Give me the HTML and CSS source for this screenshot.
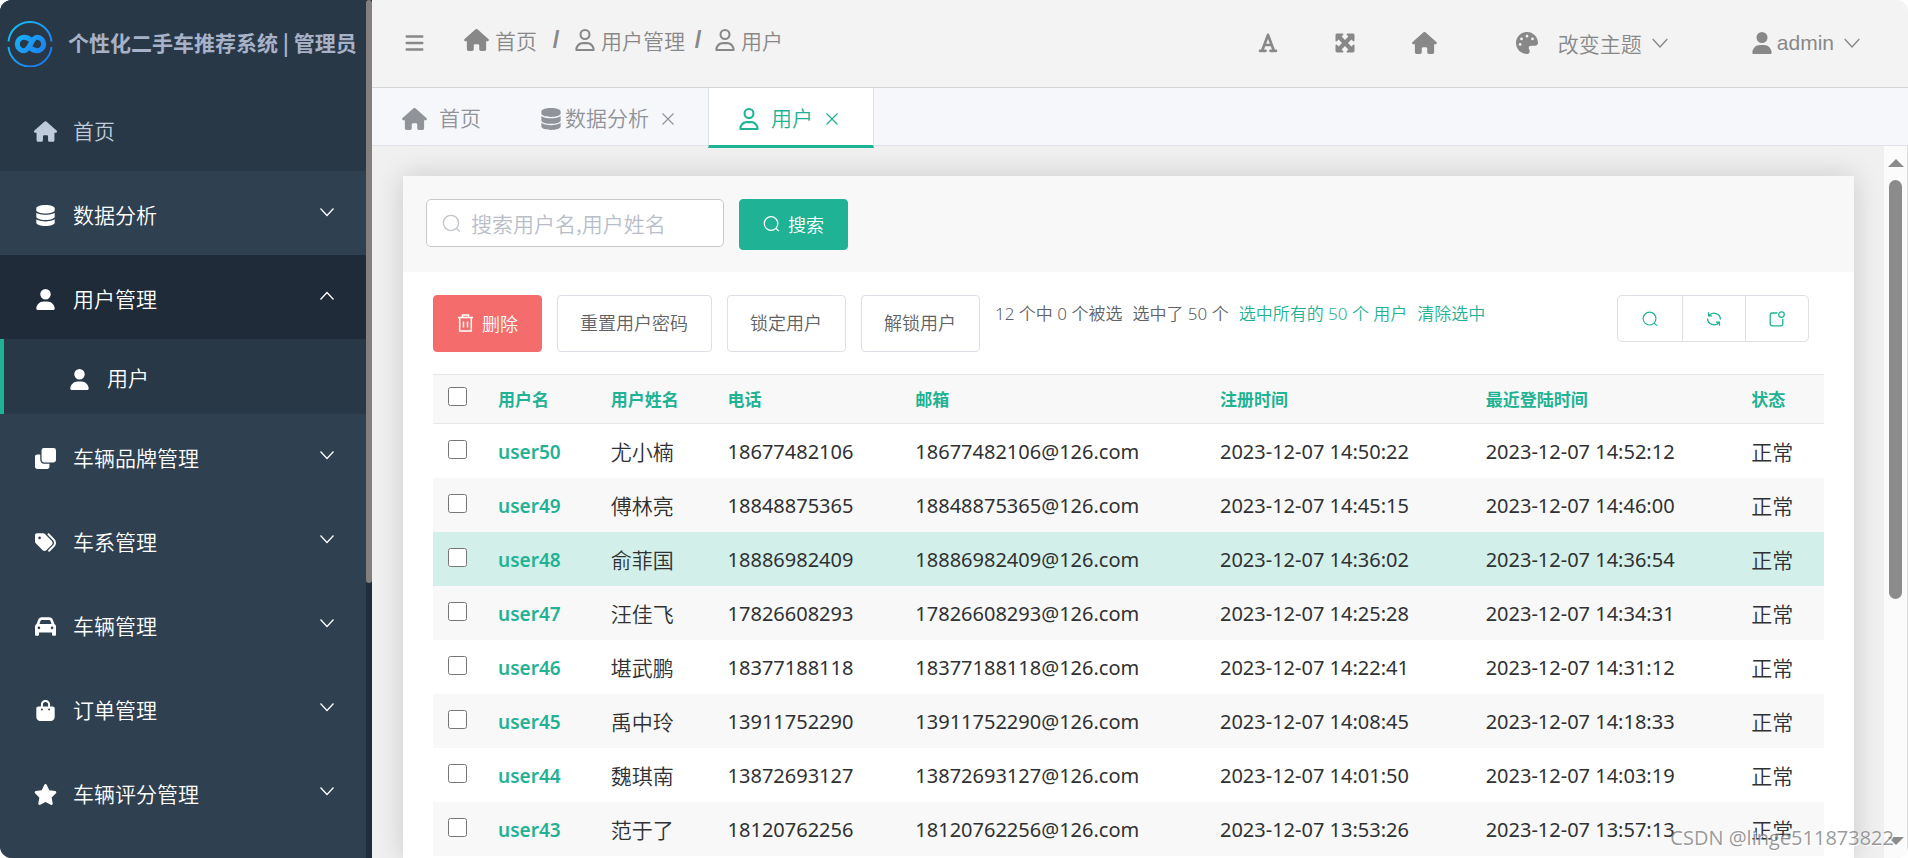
FILE: index.html
```html
<!DOCTYPE html>
<html lang="zh-CN">
<head>
<meta charset="utf-8">
<title>用户</title>
<link rel="stylesheet" href="styles.css">
</head>
<body>
<svg class="sprite" aria-hidden="true">
  <symbol id="house" viewBox="0 0 576 512"><path d="M575.800 255.500c0 18-15 32.100-32 32.100h-32l.7 160.200V472c0 22.100-17.900 40-40 40H392c-22.100 0-40-17.900-40-40v-88c0-17.700-14.300-32-32-32h-64c-17.700 0-32 14.300-32 32v88c0 22.100-17.900 40-40 40h-80c-22.100 0-40-17.900-40-40V287.600H32c-18 0-32-14-32-32.100 0-9 3-17 10-24L266.400 8c7-7 15-8 22-8s15 2 21 7l255.400 224.500c8 7 12 15 11 24z"/></symbol>
  <symbol id="user" viewBox="0 0 448 512"><path d="M224 256A128 128 0 1 0 224 0a128 128 0 1 0 0 256zm-45.700 48C79.800 304 0 383.800 0 482.300 0 498.700 13.300 512 29.700 512h388.600c16.400 0 29.700-13.300 29.700-29.700C448 383.800 368.200 304 269.700 304z"/></symbol>
  <symbol id="user-line" viewBox="0 0 448 512"><path d="M304 128a80 80 0 1 0-160 0 80 80 0 1 0 160 0zM96 128a128 128 0 1 1 256 0A128 128 0 1 1 96 128zM49.300 464h349.400c-8.900-63.300-63.300-112-129-112h-91.400c-65.700 0-120.100 48.700-129 112zM0 482.300C0 383.800 79.800 304 178.300 304h91.400C368.200 304 448 383.800 448 482.300c0 16.400-13.300 29.700-29.700 29.700H29.700C13.300 512 0 498.700 0 482.300z"/></symbol>
  <symbol id="database" viewBox="0 0 448 512"><path d="M448 80v48c0 44.200-100.300 80-224 80S0 172.200 0 128V80C0 35.800 100.300 0 224 0s224 35.800 224 80zM393.200 214.700c20.800-7.400 39.900-16.900 54.800-28.600V288c0 44.200-100.300 80-224 80S0 332.200 0 288V186.100c14.900 11.800 34 21.200 54.800 28.600C99.700 230.700 159.500 240 224 240s124.300-9.300 169.200-25.300zM0 346.100c14.900 11.800 34 21.200 54.800 28.600C99.700 390.700 159.500 400 224 400s124.300-9.300 169.200-25.300c20.800-7.400 39.900-16.900 54.800-28.600V432c0 44.200-100.300 80-224 80S0 476.200 0 432z"/></symbol>
  <symbol id="clone" viewBox="0 0 512 512"><path d="M0 216c0-35 25-56 56-56h72v128c0 53 43 96 96 96h128v72c0 31-25 56-56 56H56c-31 0-56-25-56-56z"/><rect x="160" width="352" height="352" rx="60"/></symbol>
  <symbol id="tags" viewBox="0 0 512 512"><path d="M345 39.100 472.800 168.400c52.400 53 52.400 138.200 0 191.200L360.800 472.900c-9.300 9.400-24.500 9.500-33.900.2s-9.500-24.500-.2-33.900L438.600 325.900c33.900-34.300 33.900-89.400 0-123.700L310.900 72.900c-9.300-9.400-9.200-24.600.2-33.900s24.600-9.200 33.900.1zM0 229.500V80c0-26.500 21.500-48 48-48h149.500c17 0 33.300 6.700 45.300 18.700l168 168c25 25 25 65.500 0 90.500L277.300 442.700c-25 25-65.500 25-90.500 0l-168-168C6.700 262.700 0 246.500 0 229.500zM144 144a32 32 0 1 0-64 0 32 32 0 1 0 64 0z"/></symbol>
  <symbol id="car" viewBox="0 0 512 512"><path d="M135.200 117.400 109.100 192h293.800l-26.100-74.600C372.300 104.600 360.200 96 346.600 96H165.400c-13.600 0-25.700 8.600-30.200 21.400zM39.600 196.800 74.800 96.300C88.300 57.800 124.600 32 165.400 32h181.200c40.800 0 77.100 25.800 90.600 64.300l35.200 100.500c23.200 9.600 39.600 32.500 39.600 59.200v192c0 17.700-14.300 32-32 32h-32c-17.700 0-32-14.300-32-32v-48H96v48c0 17.700-14.300 32-32 32H32c-17.700 0-32-14.300-32-32V256c0-26.700 16.400-49.600 39.600-59.200zM128 288a32 32 0 1 0-64 0 32 32 0 1 0 64 0zm288 32a32 32 0 1 0 0-64 32 32 0 1 0 0 64z"/></symbol>
  <symbol id="bag" viewBox="0 0 448 512"><path d="M160 112c0-35.300 28.700-64 64-64s64 28.700 64 64v48H160zm-48 48H48c-26.500 0-48 21.500-48 48v208c0 53 43 96 96 96h256c53 0 96-43 96-96V208c0-26.500-21.500-48-48-48h-64v-48C336 50.100 285.900 0 224 0S112 50.100 112 112zm24 48a24 24 0 1 1 0 48 24 24 0 1 1 0-48zm152 24a24 24 0 1 1 48 0 24 24 0 1 1-48 0z"/></symbol>
  <symbol id="star" viewBox="32 0 512 512"><path d="M316.900 18C311.600 7 300.400 0 288.100 0s-23.400 7-28.800 18L195 150.300 51.400 171.500c-12 1.800-22 10.200-25.700 21.700s-.7 24.200 7.900 32.700L137.800 329l-24.600 145.700c-2 12 3 24.200 12.900 31.300s23 8 33.800 2.300l128.300-68.500 128.300 68.500c10.800 5.700 23.900 4.900 33.800-2.300s14.900-19.300 12.900-31.300L438.500 329l104.200-103.100c8.600-8.500 11.700-21.200 7.900-32.700s-13.700-19.900-25.700-21.700l-143.700-21.200z"/></symbol>
  <symbol id="palette" viewBox="0 0 512 512"><path d="M512 256v2.700c-.4 36.500-33.600 61.300-70.100 61.300H344c-26.500 0-48 21.500-48 48 0 3.400.4 6.700 1 9.900 2.100 10.200 6.500 20 10.800 29.900 6.100 13.800 12.100 27.500 12.100 42 0 31.800-21.600 60.700-53.400 62-3.500.1-7 .2-10.600.2C114.600 512 0 397.400 0 256S114.600 0 256 0s256 114.600 256 256zM128 288a32 32 0 1 0-64 0 32 32 0 1 0 64 0zm0-96a32 32 0 1 0 0-64 32 32 0 1 0 0 64zM288 96a32 32 0 1 0-64 0 32 32 0 1 0 64 0zm96 96a32 32 0 1 0 0-64 32 32 0 1 0 0 64z"/></symbol>
  <symbol id="font" viewBox="0 0 20 20"><path d="M10 2 4.200 17.500M10 2l5.800 15.500M6.500 12h7M2 17.800h5.500M12.500 17.800H18" fill="none" stroke="currentColor" stroke-width="2.700" stroke-linecap="round" stroke-linejoin="round"/></symbol>
  <symbol id="expand" viewBox="0 0 20 20"><path d="M.5 2.200C.5 1.200 1.200.5 2.200.5h5.300c.9 0 1.200 1 .6 1.600L6.600 3.600 10 7l3.400-3.400-1.500-1.500c-.6-.6-.3-1.600.6-1.600h5.300c1 0 1.700.7 1.700 1.700v5.300c0 .9-1 1.200-1.600.6l-1.500-1.500L13 10l3.400 3.400 1.500-1.500c.6-.6 1.600-.3 1.600.6v5.300c0 1-.7 1.700-1.700 1.700h-5.300c-.9 0-1.200-1-.6-1.600l1.500-1.500L10 13l-3.400 3.400 1.500 1.500c.6.600.3 1.600-.6 1.600H2.200c-1 0-1.700-.7-1.700-1.700v-5.300c0-.9 1-1.200 1.600-.6l1.500 1.500L7 10 3.600 6.600 2.100 8.100C1.500 8.700.5 8.400.5 7.500z"/></symbol>
  <symbol id="bars" viewBox="0 0 18 18"><path d="M1.200 2.500h15.600M1.200 9h15.600M1.200 15.500h15.600" stroke="currentColor" stroke-width="2.400" stroke-linecap="round"/></symbol>
  <symbol id="down" viewBox="0 0 16 16"><path d="m1.500 4.500 6.500 7 6.500-7" fill="none" stroke="currentColor" stroke-width="1.300"/></symbol>
  <symbol id="up" viewBox="0 0 16 16"><path d="m1.500 11.500 6.500-7 6.500 7" fill="none" stroke="currentColor" stroke-width="1.300"/></symbol>
  <symbol id="close" viewBox="0 0 14 14"><path d="m1.500 1.500 11 11m0-11-11 11" stroke="currentColor" stroke-width="1.200"/></symbol>
  <symbol id="search" viewBox="0 0 18 18"><g fill="none" stroke="currentColor" stroke-width="1.300"><circle cx="8.500" cy="8.500" r="7.200"/><path d="m13.500 13.500 3.300 3"/></g></symbol>
  <symbol id="trash" viewBox="0 0 16 18"><path d="M.5 3.500h15M5 3V1h6v2M2.200 4v13h11.600V4M6 7.500v6M10 7.500v6" fill="none" stroke="currentColor" stroke-width="1.500"/></symbol>
  <symbol id="refresh" viewBox="0 0 16 16"><path d="M2.500 1.200v3.600h3.600M3 4.500a6.500 6.500 0 0 1 11.500 4M13.500 14.800v-3.600H9.900M13 11.500a6.500 6.500 0 0 1-11.500-4" fill="none" stroke="currentColor" stroke-width="1.300"/></symbol>
  <symbol id="notify" viewBox="0 0 16 16"><g fill="none" stroke="currentColor" stroke-width="1.300"><path d="M8.500 2H3Q1.200 2 1.200 4v8.800q0 2 2 2h8.600q2 0 2-2V7.800"/><circle cx="12.500" cy="3.600" r="2.800"/></g></symbol>
</svg>

<div class="app">
  <aside class="side">
    <nav class="menu">
      <div class="brand">
        <svg class="brand-logo" viewBox="0 0 46 46" aria-hidden="true">
          <defs><linearGradient id="blue" gradientUnits="userSpaceOnUse" x1="4" y1="8" x2="42" y2="38"><stop offset="0" stop-color="#18bcf5"/><stop offset="1" stop-color="#1f77f0"/></linearGradient></defs>
          <g fill="none" stroke="url(#blue)"><path d="M1.500 20.500a21.600 21.600 0 0 1 43 0M1.500 26a21.600 21.600 0 0 0 43 0" stroke-width="2"/><path d="M25 20c-3-2.800-5.500-3.700-8-3.700a6.500 6.500 0 0 0 0 13.400c6 0 7.500-13.400 13-13.400a6.500 6.500 0 0 1 0 13.400c-2.500 0-5-1-7.500-3.700" stroke-width="5"/></g>
        </svg>
        <strong>个性化二手车推荐系统 | 管理员</strong>
      </div>
      <a class="item home" href="#"><svg><use href="#house"/></svg><span>首页</span></a>
      <button class="item"><svg><use href="#database"/></svg><span>数据分析</span><svg class="arrow"><use href="#down"/></svg></button>
      <button class="item open"><svg><use href="#user"/></svg><span>用户管理</span><svg class="arrow"><use href="#up"/></svg></button>
      <a class="item sub" href="#"><svg><use href="#user"/></svg><span>用户</span></a>
      <button class="item"><svg><use href="#clone"/></svg><span>车辆品牌管理</span><svg class="arrow"><use href="#down"/></svg></button>
      <button class="item"><svg><use href="#tags"/></svg><span>车系管理</span><svg class="arrow"><use href="#down"/></svg></button>
      <button class="item"><svg><use href="#car"/></svg><span>车辆管理</span><svg class="arrow"><use href="#down"/></svg></button>
      <button class="item"><svg><use href="#bag"/></svg><span>订单管理</span><svg class="arrow"><use href="#down"/></svg></button>
      <button class="item"><svg><use href="#star"/></svg><span>车辆评分管理</span><svg class="arrow"><use href="#down"/></svg></button>
    </nav>
    <div class="side-track"><div class="side-thumb"></div></div>
  </aside>

  <div class="main">
    <header class="top">
      <button class="plain" aria-label="折叠菜单"><svg class="bars"><use href="#bars"/></svg></button>
      <nav class="crumbs">
        <a href="#"><svg class="wide"><use href="#house"/></svg>首页</a><b>/</b>
        <a href="#"><svg><use href="#user-line"/></svg>用户管理</a><b class="tight">/</b>
        <a href="#"><svg><use href="#user-line"/></svg>用户</a>
      </nav>
      <div class="tools">
        <button class="plain" aria-label="字体"><svg><use href="#font"/></svg></button>
        <button class="plain" aria-label="全屏"><svg><use href="#expand"/></svg></button>
        <button class="plain" aria-label="首页"><svg class="wide"><use href="#house"/></svg></button>
      </div>
      <button class="plain theme"><svg class="lead"><use href="#palette"/></svg>改变主题<svg class="caret"><use href="#down"/></svg></button>
      <button class="plain account"><svg class="lead"><use href="#user"/></svg>admin<svg class="caret"><use href="#down"/></svg></button>
    </header>

    <nav class="tabs">
      <a class="tab first" href="#"><svg class="wide"><use href="#house"/></svg><span>首页</span></a>
      <a class="tab data" href="#"><svg><use href="#database"/></svg><span>数据分析</span><svg class="x"><use href="#close"/></svg></a>
      <a class="tab active" href="#"><svg><use href="#user-line"/></svg><span>用户</span><svg class="x"><use href="#close"/></svg></a>
    </nav>

    <div class="view">
      <main class="content">
        <section class="card">
          <form class="search">
            <label class="field"><svg><use href="#search"/></svg><input type="text" placeholder="搜索用户名,用户姓名" aria-label="搜索用户名,用户姓名"></label>
            <button type="button" class="btn primary"><svg><use href="#search"/></svg>搜索</button>
          </form>
          <div class="body">
            <div class="toolbar">
              <button class="btn danger"><svg><use href="#trash"/></svg>删除</button>
              <button class="btn">重置用户密码</button>
              <button class="btn">锁定用户</button>
              <button class="btn">解锁用户</button>
              <p class="summary"><span>12 个中 0 个被选</span><span>选中了 50 个</span><a href="#">选中所有的 50 个 用户</a><a href="#">清除选中</a></p>
              <div class="group">
                <button aria-label="搜索"><svg><use href="#search"/></svg></button>
                <button aria-label="刷新"><svg><use href="#refresh"/></svg></button>
                <button aria-label="新窗口"><svg><use href="#notify"/></svg></button>
              </div>
            </div>
            <table class="users">
              <colgroup><col class="c-check"><col class="c-user"><col class="c-name"><col class="c-phone"><col class="c-mail"><col class="c-time"><col class="c-time"><col class="c-state"></colgroup>
              <thead><tr><th><input type="checkbox" aria-label="全选"></th><th>用户名</th><th>用户姓名</th><th>电话</th><th>邮箱</th><th>注册时间</th><th>最近登陆时间</th><th>状态</th></tr></thead>
              <tbody>
                <tr><td><input type="checkbox" aria-label="user50"></td><td><a href="#">user50</a></td><td class="cn">尤小楠</td><td>18677482106</td><td>18677482106@126.com</td><td>2023-12-07 14:50:22</td><td>2023-12-07 14:52:12</td><td class="cn">正常</td></tr>
                <tr><td><input type="checkbox" aria-label="user49"></td><td><a href="#">user49</a></td><td class="cn">傅林亮</td><td>18848875365</td><td>18848875365@126.com</td><td>2023-12-07 14:45:15</td><td>2023-12-07 14:46:00</td><td class="cn">正常</td></tr>
                <tr class="hover"><td><input type="checkbox" aria-label="user48"></td><td><a href="#">user48</a></td><td class="cn">俞菲国</td><td>18886982409</td><td>18886982409@126.com</td><td>2023-12-07 14:36:02</td><td>2023-12-07 14:36:54</td><td class="cn">正常</td></tr>
                <tr><td><input type="checkbox" aria-label="user47"></td><td><a href="#">user47</a></td><td class="cn">汪佳飞</td><td>17826608293</td><td>17826608293@126.com</td><td>2023-12-07 14:25:28</td><td>2023-12-07 14:34:31</td><td class="cn">正常</td></tr>
                <tr><td><input type="checkbox" aria-label="user46"></td><td><a href="#">user46</a></td><td class="cn">堪武鹏</td><td>18377188118</td><td>18377188118@126.com</td><td>2023-12-07 14:22:41</td><td>2023-12-07 14:31:12</td><td class="cn">正常</td></tr>
                <tr><td><input type="checkbox" aria-label="user45"></td><td><a href="#">user45</a></td><td class="cn">禹中玲</td><td>13911752290</td><td>13911752290@126.com</td><td>2023-12-07 14:08:45</td><td>2023-12-07 14:18:33</td><td class="cn">正常</td></tr>
                <tr><td><input type="checkbox" aria-label="user44"></td><td><a href="#">user44</a></td><td class="cn">魏琪南</td><td>13872693127</td><td>13872693127@126.com</td><td>2023-12-07 14:01:50</td><td>2023-12-07 14:03:19</td><td class="cn">正常</td></tr>
                <tr><td><input type="checkbox" aria-label="user43"></td><td><a href="#">user43</a></td><td class="cn">范于了</td><td>18120762256</td><td>18120762256@126.com</td><td>2023-12-07 13:53:26</td><td>2023-12-07 13:57:13</td><td class="cn">正常</td></tr>
              </tbody>
            </table>
          </div>
        </section>
      </main>
      <div class="scrollbar"><i class="tri-up"></i><div class="track"><div class="thumb"></div></div><i class="tri-down"></i></div>
    </div>
  </div>
  <div class="watermark">CSDN @linge511873822</div>
</div>
</body>
</html>
```
FILE: styles.css
```css
:root {
  --green: #1fb294;
  --cjk: "Noto Sans CJK SC";
}

* { box-sizing: border-box; }

body {
  margin: 0;
  background: #fff;
  font-family: "Noto Sans", var(--cjk), sans-serif;
  font-weight: 400;
  color: #303133;
}

button, input { font: inherit; }
button { cursor: pointer; }
a { color: inherit; text-decoration: none; }
svg { fill: currentColor; flex: none; }
.sprite { position: absolute; width: 0; height: 0; }

.app {
  position: relative;
  display: flex;
  height: 100vh;
  overflow: hidden;
  border-radius: 12px;
}

/* Sidebar */
.side { display: flex; flex: none; width: 372px; background: #2f4050; }
.menu { flex: 1; overflow: hidden; background: #2f4050; font-family: var(--cjk), sans-serif; font-weight: 350; }
.side-track { width: 6px; background: #202d3a; }
.side-thumb { height: 68%; border-radius: 3px; background: #827f7e; }

.brand {
  display: flex;
  align-items: center;
  gap: 15px;
  height: 87px;
  padding-left: 7px;
  background: #293846;
  color: #a7b1c8;
  font-size: 21px;
  white-space: nowrap;
}
.brand strong { padding-bottom: 3px; font-weight: 700; }
.brand-logo { width: 46px; height: 46px; }

.item {
  display: flex;
  align-items: center;
  width: 100%;
  height: 84px;
  padding: 5px 31px 0 34px;
  border: 0;
  background: none;
  color: #fff;
  font-size: 21px;
  text-align: left;
}
.item span { padding-bottom: 4px; }
.item svg { width: 23px; height: 21px; margin-right: 16px; }
.item svg.arrow { width: 16px; height: 16px; margin: 0 0 8px auto; }
.item.home { background: #293846; color: #bfcbd9; }
.item.open { background: #202b39; }
.item.sub { height: 75px; padding-left: 64px; border-left: 4px solid var(--green); background: #293846; }

/* Header */
.main { display: flex; flex: 1; flex-direction: column; min-width: 0; background: #f0f0f0; }
.plain { display: flex; align-items: center; padding: 0; border: 0; background: none; color: #888; }

.top {
  display: flex;
  flex: none;
  align-items: center;
  height: 88px;
  padding: 0 47px 2px 33px;
  border-bottom: 1px solid #d3d5d8;
  background: #f3f3f3;
  color: #888;
  font-family: "Liberation Sans", var(--cjk), sans-serif;
  font-size: 21px;
  font-weight: 350;
}
.bars { width: 19px; height: 18px; }
.crumbs { display: flex; align-items: center; gap: 14px; padding: 0 0 6px 40px; }
.crumbs a { display: flex; align-items: center; gap: 6px; }
.crumbs svg { width: 20px; height: 22px; }
.crumbs .wide { width: 25px; }
.crumbs b { width: 10px; font-size: 24px; text-align: center; }
.crumbs .tight { margin: 0 -2px 0 -6px; }
.tools { display: flex; align-items: center; gap: 57px; margin-left: auto; }
.tools svg { width: 20px; height: 20px; }
.tools .wide { width: 25px; height: 22px; }
.theme { margin-left: 79px; }
.lead { width: 22px; height: 22px; }
.theme .lead { margin-right: 20px; }
.caret { width: 18px; height: 18px; margin-left: 9px; }
.account { margin-left: 82px; }
.account .lead { margin-right: 4px; }

/* Tabs */
.tabs {
  display: flex;
  flex: none;
  height: 58px;
  border-bottom: 1px solid #dfe2ea;
  background: #f5f7fb;
  color: #909399;
  font-family: var(--cjk), sans-serif;
  font-size: 21px;
  font-weight: 350;
}
.tab { display: flex; align-items: center; padding: 4px 30px 0; }
.tab span { padding-bottom: 4px; }
.tab svg { width: 20px; height: 22px; margin-right: 12px; }
.tab .wide { width: 25px; }
.tab .x { width: 14px; height: 14px; margin: 0 0 0 12px; }
.tab.data { padding-right: 33px; }
.tab.data svg:first-child { margin-right: 4px; }
.tab.active {
  height: 60px;
  padding: 4px 34px 0 30px;
  border: solid #dcdfe6;
  border-width: 0 1px;
  border-bottom: 3px solid var(--green);
  background: #fff;
  color: var(--green);
  z-index: 1;
}

/* Content */
.view { display: flex; flex: 1; min-height: 0; }
.content { flex: 1; min-width: 0; padding: 30px 30px 0 31px; overflow: hidden; }
.card { min-height: 100%; background: #fff; box-shadow: 0 0 26px rgba(0, 0, 0, .16); }

.search { display: flex; align-items: flex-start; gap: 15px; height: 96px; padding: 23px; background: #f8f8f8; }
.field {
  display: flex;
  align-items: center;
  width: 298px;
  height: 48px;
  padding: 0 15px;
  border: 1px solid #c8c9cc;
  border-radius: 5px;
  background: #fff;
  color: #c0c4cc;
}
.field svg { width: 19px; height: 19px; margin-right: 10px; }
.field input {
  width: 100%;
  min-width: 0;
  padding: 0;
  border: 0;
  outline: 0;
  background: none;
  font-family: var(--cjk), sans-serif;
  font-size: 21px;
  font-weight: 350;
}
.field input::placeholder { color: #b8bec9; opacity: 1; }

.btn {
  display: flex;
  align-items: center;
  justify-content: center;
  height: 57px;
  padding: 0 22px 4px;
  border: 1px solid #dcdfe6;
  border-radius: 4px;
  background: #fff;
  color: #606266;
  font-family: var(--cjk), sans-serif;
  font-size: 18px;
  font-weight: 350;
  white-space: nowrap;
}
.btn svg { width: 17px; height: 18px; margin-right: 8px; }
.btn.primary, .btn.danger { width: 109px; padding-bottom: 1px; color: #fff; }
.btn.primary { height: 51px; border-color: var(--green); background: var(--green); }
.btn.danger { border-color: #f56c6c; background: #f56c6c; }

.body { padding: 23px 30px 0; }
.toolbar { display: flex; align-items: flex-start; gap: 15px; margin-bottom: 22px; padding-right: 15px; }
.toolbar .btn:not(.danger) { padding-right: 23px; }
.summary {
  display: flex;
  gap: 10px;
  margin: 8px 0 0;
  color: #606266;
  font-size: 17px;
  font-weight: 350;
  line-height: 22px;
  white-space: nowrap;
}
.summary a { color: var(--green); }
.group { display: flex; margin-left: auto; border: 1px solid #dcdfe6; border-radius: 5px; }
.group button {
  display: flex;
  align-items: center;
  justify-content: center;
  width: 63px;
  height: 45px;
  padding: 0;
  border: 0;
  background: none;
  color: var(--green);
}
.group button:first-child { width: 64px; }
.group button + button { border-left: 1px solid #dcdfe6; }
.group svg { width: 16px; height: 16px; }

/* Table */
.users { width: 100%; table-layout: fixed; border-collapse: collapse; font-size: 20px; line-height: 28px; }
.users th, .users td { padding: 0 0 0 15px; text-align: left; white-space: nowrap; }
.users th { height: 49px; color: var(--green); font-family: var(--cjk), sans-serif; font-size: 17px; font-weight: 700; }
.users thead tr { border: solid #e7e7e7; border-width: 1px 0; background: #f8f8f8; }
.users td { height: 54px; padding-top: 3px; }
.users tbody tr:nth-child(even) { background: #f8f8f8; }
.users tbody tr.hover { background: #d2efe9; }
.users td.cn { padding-top: 0; font-family: var(--cjk), sans-serif; font-size: 21px; font-weight: 350; }
.users a { color: var(--green); font-size: 19px; font-weight: 600; }
.users input { display: block; width: 19px; height: 19px; margin: 0 0 6px; }
.c-check { width: 3.6%; }
.c-user { width: 8.1%; }
.c-name { width: 8.4%; }
.c-phone { width: 13.5%; }
.c-mail { width: 21.9%; }
.c-time { width: 19.1%; }
.c-state { width: 6.3%; }

/* Scrollbar */
.scrollbar {
  display: flex;
  flex: none;
  flex-direction: column;
  align-items: center;
  width: 24px;
  padding: 13px 0;
  border-right: 1px solid #ddd;
  background: #fbfbfb;
}
.tri-up, .tri-down { border: solid transparent; border-width: 0 8px; }
.tri-up { border-bottom: 8px solid #8b8b8b; }
.tri-down { border-top: 8px solid #8b8b8b; }
.track { flex: 1; width: 13px; padding: 13px 0; }
.thumb { height: 65%; border-radius: 7px; background: #8b8b8b; }

.watermark {
  position: absolute;
  right: 14px;
  bottom: 8px;
  color: rgba(120, 120, 120, .75);
  font-family: "Open Sans", sans-serif;
  font-size: 20px;
  line-height: 24px;
  text-shadow: 1px 1px 1px #fff;
}
```
